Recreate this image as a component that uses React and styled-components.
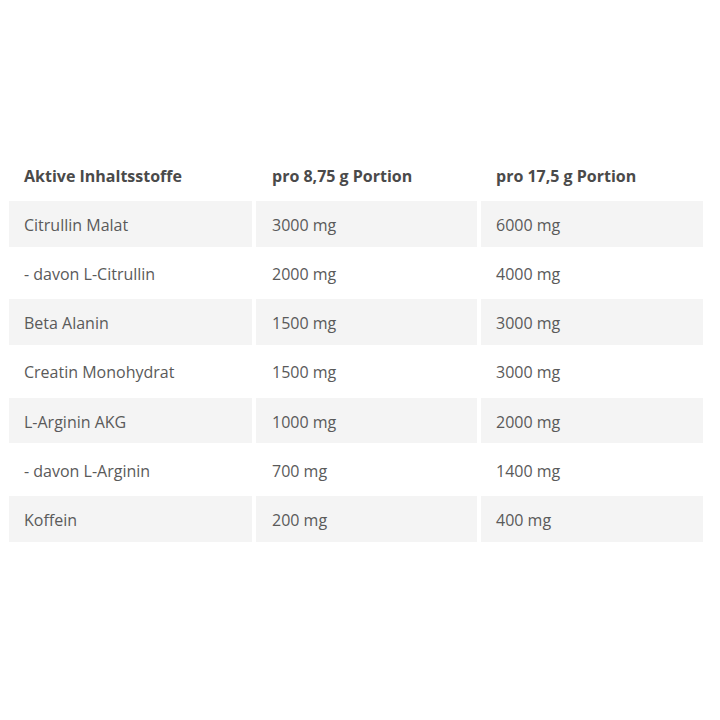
import styled, { createGlobalStyle } from "styled-components";

const GlobalStyle = createGlobalStyle`
  html, body {
    margin: 0;
    padding: 0;
    background: #fff;
  }
  body {
    font-family: "Open Sans", "Liberation Sans", sans-serif;
    color: #555;
  }
`;

const Page = styled.div`
  width: 720px;
  height: 720px;
  padding: 152px 17px 0 9px;
  box-sizing: border-box;
`;

const Table = styled.div`
  display: grid;
  grid-template-columns: 243px 221px 222px;
  grid-auto-rows: 45.5px;
  column-gap: 4px;
  row-gap: 3.67px;
`;

const Cell = styled.div`
  display: flex;
  align-items: center;
  padding-left: ${(p) => (p.$col === 1 ? "16px" : "15px")};
  padding-top: 2px;
  background: ${(p) => (p.$shaded ? "#f4f4f4" : "transparent")};
  font-size: 16px;
  font-weight: ${(p) => (p.$head ? 700 : 400)};
  color: ${(p) => (p.$head ? "#4a4a4a" : "#5a5a5a")};
  white-space: nowrap;
`;

const header = ["Aktive Inhaltsstoffe", "pro 8,75 g Portion", "pro 17,5 g Portion"];

const rows = [
  ["Citrullin Malat", "3000 mg", "6000 mg"],
  ["- davon L-Citrullin", "2000 mg", "4000 mg"],
  ["Beta Alanin", "1500 mg", "3000 mg"],
  ["Creatin Monohydrat", "1500 mg", "3000 mg"],
  ["L-Arginin AKG", "1000 mg", "2000 mg"],
  ["- davon L-Arginin", "700 mg", "1400 mg"],
  ["Koffein", "200 mg", "400 mg"],
];

export default function App() {
  return (
    <>
      <GlobalStyle />
      <Page>
        <Table>
          {header.map((h, i) => (
            <Cell key={h} $head $col={i}>
              {h}
            </Cell>
          ))}
          {rows.map((row, r) =>
            row.map((val, c) => (
              <Cell key={`${r}-${c}`} $col={c} $shaded={r % 2 === 0}>
                {val}
              </Cell>
            ))
          )}
        </Table>
      </Page>
    </>
  );
}
